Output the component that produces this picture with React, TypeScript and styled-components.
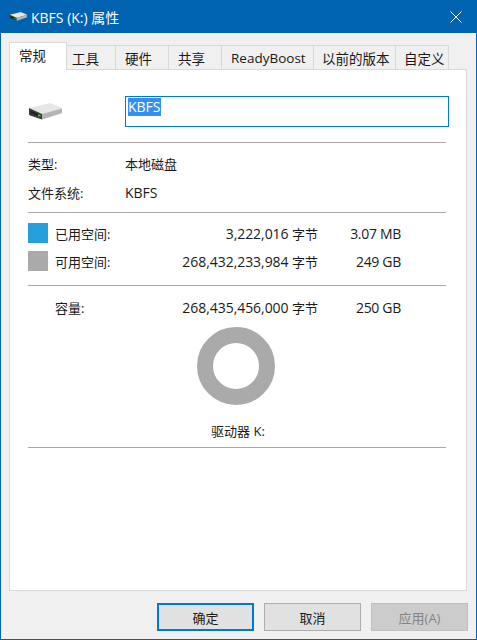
import React from 'react';
import styled, { createGlobalStyle } from 'styled-components';

const GlobalStyle = createGlobalStyle`
  html, body {
    margin: 0;
    padding: 0;
    background: #f0f0f0;
  }
`;

const Window = styled.div`
  box-sizing: border-box;
  width: 477px;
  height: 640px;
  display: flex;
  flex-direction: column;
  background: #f0f0f0;
  border: 1px solid #0063b1;
  border-top: none;
  font-family: "Open Sans", "Noto Sans CJK SC", sans-serif;
  font-size: 14px;
  color: #1a1a1a;
  overflow: hidden;
`;

const TitleBar = styled.div`
  flex: none;
  height: 33px;
  display: flex;
  align-items: center;
  gap: 4px;
  padding: 0 14px 0 8px;
  background: #0063b1;
  color: #fff;
`;

const TitleText = styled.div`
  flex: 1;
  font-size: 14px;
`;

const TabStrip = styled.div`
  flex: none;
  display: flex;
  align-items: flex-end;
  height: 27px;
  margin: 9px 0 0 8px;
  font-size: 13.5px;
`;

const Tab = styled.div<{ $w: number; $pad: number; $active?: boolean }>`
  box-sizing: border-box;
  width: ${(p) => p.$w}px;
  height: ${(p) => (p.$active ? 28 : 24)}px;
  display: flex;
  align-items: center;
  padding-left: ${(p) => p.$pad}px;
  padding-bottom: ${(p) => (p.$active ? 3 : 0)}px;
  white-space: nowrap;
  background: ${(p) => (p.$active ? '#fff' : '#f0f0f0')};
  border: 1px solid #d9d9d9;
  border-left: ${(p) => (p.$active ? '1px solid #d9d9d9' : 'none')};
  border-bottom: none;
  position: relative;
  z-index: ${(p) => (p.$active ? 1 : 0)};
  margin-bottom: ${(p) => (p.$active ? -1 : 0)}px;
`;

const Panel = styled.div`
  box-sizing: border-box;
  flex: none;
  width: 458px;
  height: 522px;
  margin-left: 8px;
  padding: 26px 19px 0 18px;
  background: #fff;
  border: 1px solid #d9d9d9;
`;

const NameRow = styled.div`
  display: flex;
  align-items: center;
  height: 31px;
`;

const DriveSlot = styled.div`
  width: 97px;
  flex: none;
  display: flex;
`;

const NameInput = styled.div`
  box-sizing: border-box;
  width: 324px;
  height: 31px;
  flex: none;
  display: flex;
  align-items: flex-start;
  padding: 1px 0 0 2px;
  border: 1px solid #0078d7;
`;

const Selected = styled.span`
  background: #3390f0;
  color: #fff;
  line-height: 18px;
`;

const Rule = styled.div<{ $top: number; $bottom: number }>`
  height: 1px;
  width: 418px;
  background: #a8a8a8;
  margin: ${(p) => p.$top}px 0 ${(p) => p.$bottom}px;
`;

const InfoRow = styled.div`
  display: flex;
  align-items: center;
  height: 20px;
  margin-bottom: 9px;
`;

const InfoLabel = styled.div`
  width: 97px;
  flex: none;
  font-size: 13px;
`;

const InfoValue = styled.div<{ $size: number }>`
  font-size: ${(p) => p.$size}px;
`;

const SpaceRow = styled.div`
  display: grid;
  grid-template-columns: 20px 7px 80px 183px 83px;
  align-items: center;
  height: 20px;
  margin-bottom: 8px;
`;

const Swatch = styled.div<{ $color: string }>`
  width: 20px;
  height: 20px;
  background: ${(p) => p.$color};
  grid-column: 1;
`;

const SpaceLabel = styled.div`
  grid-column: 3;
  white-space: nowrap;
  font-size: 13px;
`;

const Bytes = styled.div`
  grid-column: 4;
  text-align: right;
  white-space: nowrap;
  letter-spacing: -0.05px;
`;

const Unit = styled.span`
  font-size: 13px;
`;

const Size = styled.div`
  grid-column: 5;
  text-align: right;
  white-space: nowrap;
  letter-spacing: -0.3px;
`;

const DonutWrap = styled.div`
  width: 416px;
  display: flex;
  justify-content: center;
  margin-top: 10px;
`;

const Donut = styled.div`
  box-sizing: border-box;
  width: 78px;
  height: 78px;
  border-radius: 50%;
  border: 16px solid #aaaaaa;
`;

const DriveLabel = styled.div`
  width: 420px;
  text-align: center;
  margin-top: 16px;
  line-height: 20px;
  font-size: 13px;
`;

const Footer = styled.div`
  flex: 1;
  display: flex;
  justify-content: flex-end;
  align-items: flex-start;
  gap: 10px;
  padding: 12px 8px 0 0;
`;

const DialogButton = styled.div<{ $primary?: boolean; $disabled?: boolean }>`
  box-sizing: border-box;
  width: 97px;
  height: 28px;
  display: flex;
  align-items: center;
  justify-content: center;
  font-size: 13px;
  background: ${(p) => (p.$disabled ? '#cccccc' : '#e1e1e1')};
  color: ${(p) => (p.$disabled ? '#848484' : '#1a1a1a')};
  border: ${(p) => (p.$primary ? '2px solid #0078d7' : p.$disabled ? '1px solid #bfbfbf' : '1px solid #adadad')};
`;

const Drive = ({ size }: { size: number }) => (
  <svg width={size} height={size * 0.5} viewBox="0 0 34 17">
    <path d="M1 5 L21 0.3 Q22 0 23 0.4 L33.5 4.8 Q34 5.2 33 5.8 L15 11 Q14 11.3 13 11 Z" fill="#e6e6e6" />
    <path d="M14 11 L34 5.5 L34 9.5 Q34 10 33 10.4 L15 16.3 Q14 16.6 14 16.5 Z" fill="#b4b4b4" />
    <path d="M1 5 L14 11 L14 16.5 L2 12.5 Q1 12 1 11 Z" fill="#3a3a3a" />
    <path d="M3 8 L12 12 L12 13.5 L3 10 Z" fill="#1c1c1c" />
    <rect x="10" y="11.5" width="2.5" height="2" fill="#2fbf4a" />
  </svg>
);

const tabs = [
  { label: '工具', w: 49, pad: 5 },
  { label: '硬件', w: 53, pad: 9 },
  { label: '共享', w: 53, pad: 9 },
  { label: 'ReadyBoost', w: 92, pad: 9 },
  { label: '以前的版本', w: 82, pad: 8 },
  { label: '自定义', w: 53, pad: 8 },
];

export default function App() {
  return (
    <Window>
      <GlobalStyle />
      <TitleBar>
        <Drive size={18} />
        <TitleText>KBFS (K:) 属性</TitleText>
        <svg width="12" height="12" viewBox="0 0 12 12">
          <path d="M0.5 0.5 L11.5 11.5 M11.5 0.5 L0.5 11.5" stroke="#fff" strokeWidth="1" fill="none" />
        </svg>
      </TitleBar>
      <TabStrip>
        <Tab $w={58} $pad={9} $active>常规</Tab>
        {tabs.map((t) => (
          <Tab key={t.label} $w={t.w} $pad={t.pad}>{t.label}</Tab>
        ))}
      </TabStrip>
      <Panel>
        <NameRow>
          <DriveSlot>
            <Drive size={34} />
          </DriveSlot>
          <NameInput>
            <Selected>KBFS</Selected>
          </NameInput>
        </NameRow>
        <Rule $top={15} $bottom={10} />
        <InfoRow>
          <InfoLabel>类型:</InfoLabel>
          <InfoValue $size={13}>本地磁盘</InfoValue>
        </InfoRow>
        <InfoRow>
          <InfoLabel>文件系统:</InfoLabel>
          <InfoValue $size={14}>KBFS</InfoValue>
        </InfoRow>
        <Rule $top={10} $bottom={10} />
        <SpaceRow>
          <Swatch $color="#26a0da" />
          <SpaceLabel>已用空间:</SpaceLabel>
          <Bytes>3,222,016 <Unit>字节</Unit></Bytes>
          <Size>3.07 MB</Size>
        </SpaceRow>
        <SpaceRow>
          <Swatch $color="#aaaaaa" />
          <SpaceLabel>可用空间:</SpaceLabel>
          <Bytes>268,432,233,984 <Unit>字节</Unit></Bytes>
          <Size>249 GB</Size>
        </SpaceRow>
        <Rule $top={14} $bottom={11} />
        <SpaceRow>
          <SpaceLabel>容量:</SpaceLabel>
          <Bytes>268,435,456,000 <Unit>字节</Unit></Bytes>
          <Size>250 GB</Size>
        </SpaceRow>
        <DonutWrap>
          <Donut />
        </DonutWrap>
        <DriveLabel>驱动器 K:</DriveLabel>
        <Rule $top={6} $bottom={0} />
      </Panel>
      <Footer>
        <DialogButton $primary>确定</DialogButton>
        <DialogButton>取消</DialogButton>
        <DialogButton $disabled>应用(A)</DialogButton>
      </Footer>
    </Window>
  );
}
